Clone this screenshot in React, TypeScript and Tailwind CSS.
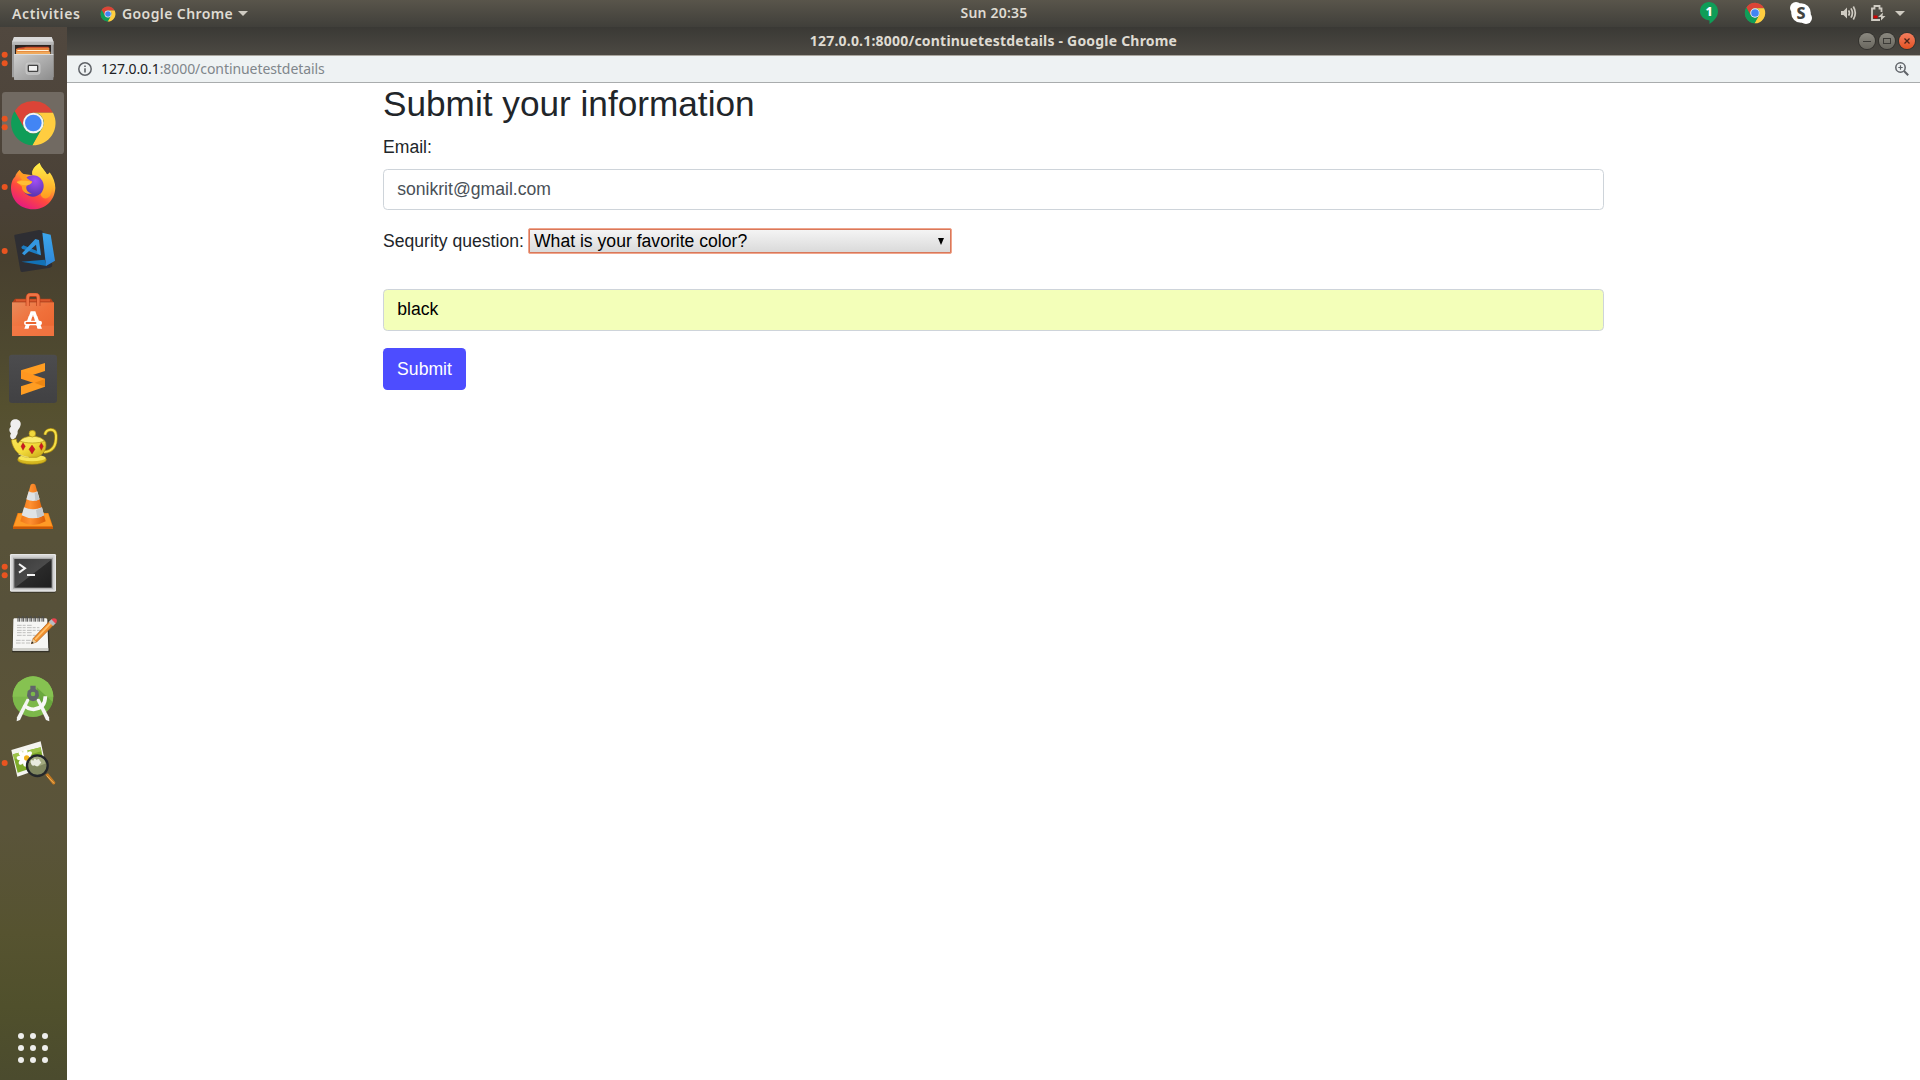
import React from "react";

const UI = "font-['Noto_Sans','Open_Sans',sans-serif]";

function ChromeGlyph({ cx, cy, r }: { cx: number; cy: number; r: number }) {
  return (
    <g transform={`translate(${cx} ${cy}) scale(${r / 67})`}>
      <circle r="66" fill="#4d8a50" />
      <path d="M-58 -33A67 67 0 0 1 59 -31H0A31 31 0 0 0 -27 -15L-31 15Z" fill="#db4437" />
      <path d="M59 -31A67 67 0 0 1 -3 67L27 15A31 31 0 0 0 16 -28L0 -31Z" fill="#ffcd40" />
      <path d="M-3 67A67 67 0 0 1 -56 -36L-27 16A31 31 0 0 0 20 25Z" fill="#0f9d58" />
      <circle r="31" fill="#f4f4f4" />
      <circle r="25" fill="#4285f4" />
    </g>
  );
}

function Files() {
  return (
    <>
      <defs>
        <linearGradient id="cab" x1="0" y1="0" x2="1" y2="1">
          <stop offset="0" stopColor="#cfcfcf" />
          <stop offset="0.45" stopColor="#b0b0b0" />
          <stop offset="1" stopColor="#8c8c8c" />
        </linearGradient>
      </defs>
      <path d="M42 51H155L161 68V172H36V68Z" fill="#a0a0a0" />
      <path d="M42 51H155L161 66H36Z" fill="#d9d9d9" />
      <rect x="36" y="65" width="125" height="9" fill="#b9b9b9" />
      <rect x="45" y="75" width="108" height="30" fill="#2b2421" />
      <path d="M52 84L80 80H146V92H52Z" fill="#c8452a" />
      <path d="M48 86H72L76 83H148V103H48Z" fill="#e2803a" />
      <rect x="52" y="90" width="94" height="3" fill="#fff3dc" />
      <rect x="49" y="95" width="102" height="8" fill="#f0a95a" />
      <rect x="42" y="102" width="118" height="78" rx="2" fill="url(#cab)" />
      <rect x="42" y="102" width="118" height="3" fill="#dcdcdc" />
      <rect x="78" y="129" width="42" height="34" rx="7" fill="#bdbdbd" stroke="#d2d2d2" strokeWidth="2" />
      <rect x="85" y="136" width="28" height="18" rx="2" fill="#f2f2f2" stroke="#444" strokeWidth="4" />
    </>
  );
}

function Firefox() {
  return (
    <>
      <defs>
        <linearGradient id="fx" x1="0.8" y1="0" x2="0.25" y2="1">
          <stop offset="0" stopColor="#fff44f" />
          <stop offset="0.35" stopColor="#ffb52c" />
          <stop offset="0.65" stopColor="#ff4a3d" />
          <stop offset="1" stopColor="#e31587" />
        </linearGradient>
        <radialGradient id="fxg" cx="0.6" cy="0.25" r="0.8">
          <stop offset="0" stopColor="#a04ff5" />
          <stop offset="1" stopColor="#5232a8" />
        </radialGradient>
        <linearGradient id="fxy" x1="0" y1="0" x2="0" y2="1">
          <stop offset="0" stopColor="#fff04a" />
          <stop offset="1" stopColor="#ff9a1f" />
        </linearGradient>
      </defs>
      <path d="M59 450C64 458 68 462 76 463L98 466C92 450 108 436 119 429C122 442 134 450 140 462C146 464 148 458 149 457C160 472 166 488 166 504C164 542 136 568 99 568C60 568 34 540 33 505C33 488 38 478 46 469C47 464 52 455 59 450Z" fill="url(#fx)" />
      <path d="M98 466C92 450 108 436 119 429C122 442 134 450 142 466C160 482 160 508 150 528C140 540 126 536 122 524C132 502 126 476 98 466Z" fill="url(#fxy)" />
      <circle cx="99" cy="498" r="32" fill="url(#fxg)" />
      <path d="M59 450C62 462 70 466 78 464C76 474 88 480 96 484C98 490 88 494 80 497C76 506 82 518 96 520C78 526 64 512 66 500C60 494 54 490 50 486C52 482 62 480 66 480C58 470 56 458 59 450Z" fill="#ff9b20" />
      <path d="M50 487C58 481 74 481 96 485C94 492 84 496 76 496C66 496 58 492 50 487Z" fill="#ffbd35" />
    </>
  );
}

function VsCode() {
  return (
    <>
      <defs>
        <linearGradient id="vs" x1="0" y1="0" x2="0" y2="1">
          <stop offset="0" stopColor="#3ba6ee" />
          <stop offset="1" stopColor="#2f86d6" />
        </linearGradient>
      </defs>
      <path d="M45 59L117 45Q127 45 129 52L157 150Q157 157 150 158L67 171Q62 172 61 166L43 64Q42 60 45 59Z" fill="#2e2e33" />
      <path d="M64 140L134 134L140 153Z" fill="#1272b6" />
      <path d="M127 53L152 59L165 137L138 153Z" fill="url(#vs)" />
      <path d="M64 96L70 91L112 108L123 121L112 118L66 101Z" fill="#1b7cc2" />
      <path d="M106 72L117 75L123 121L112 115L108 89L73 121L66 115Z" fill="#3397e0" />
    </>
  );
}

function Software() {
  return (
    <>
      <defs>
        <linearGradient id="bag" x1="0" y1="0" x2="1" y2="1">
          <stop offset="0" stopColor="#e98a5b" />
          <stop offset="0.5" stopColor="#f0703a" />
          <stop offset="1" stopColor="#e9642f" />
        </linearGradient>
      </defs>
      <path d="M45 251H153L161 263H36Z" fill="#b5401b" />
      <rect x="48" y="253" width="102" height="6" fill="#d9582c" />
      <rect x="36" y="262" width="126" height="101" fill="url(#bag)" />
      <rect x="36" y="332" width="126" height="31" fill="#f47b49" opacity="0.6" />
      <path d="M83 273V249Q83 240 91 240H107Q115 240 115 249V273" fill="none" stroke="#b93f19" strokeWidth="12" />
      <path d="M83 274V249Q83 239 91 239H107Q115 239 115 249V274" fill="none" stroke="#ef7445" strokeWidth="8" />
      <path d="M92 289H106L112 306H101L99 300L97 306H86Z M81 318H93L86 341H73Z M105 318H117L126 341H112Z" fill="#fff" />
      <path d="M86 304H97L93 318H81Z M101 304H112L117 318H105Z" fill="#fff" />
      <rect x="72" y="317" width="54" height="14" rx="7" fill="#fff" />
      <rect x="77" y="321" width="32" height="6" rx="2" fill="#ea6630" />
      <path d="M88 333H110L112 342H86Z" fill="#ee7040" />
    </>
  );
}

function Sublime() {
  return (
    <>
      <defs>
        <linearGradient id="sub" x1="0" y1="0" x2="0" y2="1">
          <stop offset="0" stopColor="#4c4c4e" />
          <stop offset="1" stopColor="#414143" />
        </linearGradient>
      </defs>
      <rect x="27" y="419" width="144" height="145" rx="9" fill="url(#sub)" />
      <path d="M63 466L135 444V468L63 491Z" fill="#ff9d22" />
      <path d="M63 514L135 491V515L63 540Z" fill="#ff9d22" />
      <path d="M63 467L135 491V515L63 491Z" fill="#ff9720" />
      <path d="M104 503L135 492V515Z" fill="#ec8612" />
    </>
  );
}

function Teapot() {
  return (
    <>
      <defs>
        <linearGradient id="pot" x1="0" y1="0" x2="1" y2="1">
          <stop offset="0" stopColor="#f7e45a" />
          <stop offset="0.5" stopColor="#f4dc3c" />
          <stop offset="1" stopColor="#c5a313" />
        </linearGradient>
      </defs>
      <path d="M38 90C30 84 28 78 33 70C26 62 27 54 33 50C28 40 34 28 44 28C54 26 64 34 62 44C60 56 52 58 53 66C54 74 48 76 48 82Z" fill="#efefef" />
      <path d="M135 74C138 56 166 52 168 76C169 96 166 124 132 126" fill="none" stroke="#a98a10" strokeWidth="10" />
      <path d="M135 74C138 56 166 52 168 76C169 96 166 124 132 126" fill="none" stroke="#f4df48" strokeWidth="6" />
      <ellipse cx="96" cy="149" rx="43" ry="14" fill="#d5b720" stroke="#a58610" strokeWidth="2" />
      <ellipse cx="96" cy="144" rx="41" ry="10" fill="#f6e556" />
      <path d="M34 90L49 87C50 98 53 101 57 97C64 78 130 78 137 97C142 120 128 136 110 142H82C62 140 38 122 34 90Z" fill="url(#pot)" stroke="#a98a10" strokeWidth="2" />
      <path d="M60 93C72 74 122 74 133 93C120 101 74 101 60 93Z" fill="#f9eb6e" stroke="#b19215" strokeWidth="2" />
      <circle cx="97" cy="71" r="10" fill="#f1d83c" stroke="#ab8b10" strokeWidth="2" />
      <path d="M69 98L76 109L69 121L63 109Z M96 105L105 118L96 132L87 118Z M124 98L130 109L124 121L118 109Z" fill="#cf1722" stroke="#8f1a10" strokeWidth="1" />
      <path d="M55 132Q76 142 86 142" fill="none" stroke="#fff7a5" strokeWidth="2" />
    </>
  );
}

function Vlc() {
  return (
    <>
      <defs>
        <linearGradient id="cone" x1="0" y1="0" x2="1" y2="0">
          <stop offset="0" stopColor="#f07818" />
          <stop offset="0.4" stopColor="#ff9030" />
          <stop offset="1" stopColor="#d95c06" />
        </linearGradient>
      </defs>
      <path d="M53 309H145L159 350V357H39V350Z" fill="#f57e0e" />
      <path d="M39 350H159V357H39Z" fill="#c95a08" />
      <path d="M55 311H144L156 348H42Z" fill="#ff9a26" />
      <path d="M92 224Q99 219 106 224L137 334Q99 356 61 334Z" fill="url(#cone)" />
      <path d="M86 244Q99 251 112 244L119 268Q99 278 79 268Z" fill="#dfe3e6" />
      <path d="M72 292Q99 304 126 292L132 316Q99 334 65 316Z" fill="#dfe3e6" />
      <path d="M112 246L118 268Q112 272 106 273L104 249Z M126 293L132 316Q122 322 112 324L108 300Z" fill="#c3c8cc" />
    </>
  );
}

function Terminal() {
  return (
    <>
      <defs>
        <linearGradient id="scr" x1="0" y1="0" x2="1" y2="1">
          <stop offset="0" stopColor="#3c3c3c" />
          <stop offset="0.5" stopColor="#4a4a4a" />
          <stop offset="0.52" stopColor="#2a2a2a" />
          <stop offset="1" stopColor="#1f1f1f" />
        </linearGradient>
      </defs>
      <rect x="32" y="540" width="134" height="9" rx="3" fill="#25231e" opacity="0.5" />
      <rect x="30" y="432" width="138" height="113" rx="4" fill="#e6e6e6" />
      <rect x="34" y="436" width="130" height="105" rx="2" fill="#d2d2d2" />
      <rect x="39" y="443" width="120" height="93" fill="#a8a8a8" />
      <rect x="43" y="447" width="112" height="86" fill="url(#scr)" />
      <path d="M57 462L75 475L57 488" fill="none" stroke="#f4f4f4" strokeWidth="6" />
      <rect x="81" y="492" width="24" height="6" fill="#f4f4f4" />
    </>
  );
}

function TextEditor() {
  return (
    <>
      <path d="M40 60H146L149 157H36Z" fill="#26251f" opacity="0.7" />
      <path d="M43 55H138Q142 55 142 60L145 152H38L40 60Q40 55 43 55Z" fill="#f6f6f4" />
      <path d="M38 144H145V152H38Z" fill="#cfcfca" />
      <g fill="none" stroke="#a3a3a1" strokeWidth="2">
        <path strokeDasharray="14 3 9 4" d="M51 76H98M51 83H118M51 91H126M51 98H96M51 106H114M48 121H106M48 129H90" />
      </g>
      <g fill="none" stroke="#4b4b49" strokeWidth="3">
        {[54, 66, 78, 90, 102, 114, 126].map((x) => (
          <path key={x} d={`M${x} 65V53Q${x} 49 ${x + 3} 49Q${x + 5} 50 ${x + 5} 54V65`} />
        ))}
      </g>
      <path d="M94 131L100 115L148 64L160 76L110 126Z" fill="#f08f2c" stroke="#a65a16" strokeWidth="2" />
      <path d="M104 116L150 68L154 71L107 121Z" fill="#ffc06c" />
      <path d="M94 131L99 117L109 126Z" fill="#e9cfa0" />
      <path d="M93 132L96 124L101 129Z" fill="#222" />
      <path d="M146 66L155 57L168 69L159 78Z" fill="#b7bcc2" />
      <path d="M154 58Q160 52 168 56Q174 62 167 71Z" fill="#e8434e" />
    </>
  );
}

function AndroidStudio() {
  return (
    <>
      <circle cx="99" cy="290" r="61" fill="#7cb84a" />
      <path d="M38 290A61 61 0 0 1 160 290Z" fill="#86c251" />
      <path d="M110 262L158 306A61 61 0 0 1 142 334L112 300Z" fill="#5f9c36" opacity="0.7" />
      <path d="M90 297L60 360L50 364L51 352L80 296Z" fill="#f3f3f3" />
      <path d="M108 297L138 360L148 364L147 352L118 296Z" fill="#f3f3f3" />
      <path d="M72 315Q84 328 101 328Q136 325 136 289" fill="none" stroke="#f7f7f7" strokeWidth="11" />
      <path d="M91 257H107V267L115 273L117 288L109 301L99 304L89 301L81 288L83 273L91 267Z" fill="#616569" />
      <circle cx="99" cy="282" r="7" fill="#7cb84a" />
    </>
  );
}

function ImageViewer() {
  const petals = [0, 45, 90, 135, 180, 225, 270, 315];
  return (
    <>
      <path d="M34 450L122 424L138 500L52 530Z" fill="#f4f4f0" />
      <path d="M39 463L122 442L132 492L53 518Z" fill="#7eab2a" />
      <path d="M39 463L122 442L124 454L42 478Z" fill="#9cc248" />
      {petals.map((a) => (
        <ellipse key={a} cx="76" cy="461" rx="7" ry="13" fill="#fff" transform={`rotate(${a} 76 474)`} />
      ))}
      <path d="M136 524L144 520L166 547Q166 556 158 553Z" fill="#c57a22" />
      <path d="M140 527L162 550" stroke="#f0b45c" strokeWidth="3" />
      <circle cx="112" cy="497" r="32" fill="#7f865f" />
      <path d="M84 484Q93 469 114 469Q134 470 138 490L112 500Z" fill="#a3ab80" />
      <path d="M92 486Q92 476 100 482Q104 470 110 480Q118 472 120 484Q128 486 118 494Q112 502 104 496Q94 500 92 486Z" fill="#e9ebe0" />
      <circle cx="80" cy="474" r="8" fill="#f1b31c" />
      <circle cx="112" cy="497" r="31" fill="none" stroke="#24272a" strokeWidth="7" />
    </>
  );
}

type Item = { name: string; top: number; dots: number; active?: boolean; art: React.ReactNode };

const ITEMS: Item[] = [
  { name: "Files", top: 21, dots: 2, art: <Files /> },
  { name: "Google Chrome", top: 213, dots: 2, active: true, art: <ChromeGlyph cx={100} cy={309} r={67} /> },
  { name: "Firefox", top: 405, dots: 1, art: <Firefox /> },
  { name: "Visual Studio Code", top: 12, dots: 1, art: <VsCode /> },
  { name: "Ubuntu Software", top: 204, dots: 0, art: <Software /> },
  { name: "Sublime Text", top: 396, dots: 0, art: <Sublime /> },
  { name: "Teapot", top: 3, dots: 0, art: <Teapot /> },
  { name: "VLC", top: 195, dots: 0, art: <Vlc /> },
  { name: "Terminal", top: 387, dots: 2, art: <Terminal /> },
  { name: "Text Editor", top: 9, dots: 0, art: <TextEditor /> },
  { name: "Android Studio", top: 201, dots: 0, art: <AndroidStudio /> },
  { name: "Image Viewer", top: 393, dots: 1, art: <ImageViewer /> },
];

function DockItem({ item }: { item: Item }) {
  const ys = item.dots === 2 ? [83, 109] : item.dots === 1 ? [96] : [];
  return (
    <svg aria-label={item.name} className="block h-16 w-[67px] shrink-0" viewBox={`0 ${item.top} 201 192`}>
      {item.active && <rect x="6" y={item.top + 3} width="186" height="186" rx="10" fill="#716a62" />}
      {ys.map((y) => (
        <circle key={y} cx="14" cy={item.top + y} r="9" fill="#e95420" />
      ))}
      {item.art}
    </svg>
  );
}

function Dock() {
  return (
    <nav className="flex w-[67px] shrink-0 flex-col bg-[linear-gradient(180deg,#51483f_0%,#4a4136_17%,#48402f_22%,#4e4930_31%,#55502f_36%,#595338_42%,#57513a_55%,#5b5438_66%,#5a543a_76%,#565330_86%,#50502c_93%,#4b4b2e_100%)]">
      {ITEMS.map((item) => (
        <DockItem key={item.name} item={item} />
      ))}
      <div className="mt-auto mb-[17px] ml-[18px] grid w-[30px] grid-cols-3 gap-[6px]">
        {Array.from({ length: 9 }, (_, i) => (
          <span key={i} className="size-[6px] rounded-full bg-[#eeeeec]" />
        ))}
      </div>
    </nav>
  );
}

function TopBar() {
  return (
    <header className={`${UI} grid h-[27px] shrink-0 grid-cols-[1fr_auto_1fr] items-center bg-linear-to-b from-[#59554b] to-[#403f3a] text-[14px] leading-[27px] font-semibold text-[#dfdbd2]`}>
      <div className="flex items-center pl-3">
        <span className="w-[68px] tracking-[0.6px] whitespace-nowrap">Activities</span>
        <svg className="ml-5 size-4" viewBox="0 0 16 16">
          <ChromeGlyph cx={8} cy={8} r={7.5} />
        </svg>
        <span className="ml-[6px] w-[111px] tracking-[0.4px] whitespace-nowrap">Google Chrome</span>
        <svg className="ml-[5px] h-[5px] w-[10px]" viewBox="0 0 10 5">
          <path d="M0 0H10L5 5Z" fill="#cfcbc2" />
        </svg>
      </div>
      <span className="relative -top-px left-[34px] tracking-[0.2px] whitespace-nowrap">Sun 20:35</span>
      <div className="flex items-center justify-end pr-[15px]">
        <svg className="h-[27px] w-[220px]" viewBox="1685 0 220 27">
          <path d="M1709 2C1714 2 1718 6 1718 11.300C1718 17 1714 21 1709.500 24V20.500C1704 20 1700 16 1700 11.300C1700 6 1704 2 1709 2Z" fill="#0f9d58" />
          <text x="1709" y="16" textAnchor="middle" fontSize="12.500" fontWeight="800" fill="#fff" fontFamily="Noto Sans">1</text>
          <ChromeGlyph cx={1755} cy={13} r={10.3} />
          <circle cx="1801" cy="13" r="9.800" fill="#fff" />
          <circle cx="1796" cy="8" r="6" fill="#fff" />
          <circle cx="1806" cy="18" r="6" fill="#fff" />
          <text x="1801" y="18.600" textAnchor="middle" fontSize="16" fontWeight="800" fill="#444440" fontFamily="Noto Sans">S</text>
          <path d="M1841 11H1843.500L1847 7.500V18.500L1843.500 15H1841Z" fill="#cfcbc2" />
          <g fill="none" stroke="#cfcbc2" strokeWidth="1.700">
            <path d="M1848.600 10.400Q1850.200 13 1848.600 15.600M1851 8.400Q1853.800 13 1851 17.600M1853.300 6.500Q1857.300 13 1853.300 19.500" />
            <path strokeWidth="1.800" d="M1880 20H1872V8.500H1874.500V6H1879.500V8.500H1881.500V12" />
          </g>
          <rect x="1873.500" y="15.500" width="4" height="2.800" fill="#d40000" />
          <path d="M1883 12.500L1878 17H1881V20.500L1885.500 16H1882.500Z" fill="#cfcbc2" />
          <path d="M1895 11H1905L1900 16Z" fill="#cfcbc2" />
        </svg>
      </div>
    </header>
  );
}

function TitleBar() {
  return (
    <div className={`${UI} grid h-7 shrink-0 grid-cols-[1fr_auto_1fr] items-center bg-linear-to-b from-[#3a3935] to-[#4c4943] text-[14px] leading-7 font-bold text-[#dfdbd2]`}>
      <span />
      <span className="tracking-[0.2px] whitespace-nowrap">127.0.0.1:8000/continuetestdetails - Google Chrome</span>
      <div className="flex justify-end gap-1 pr-[5px]">
        <span className="grid size-4 place-items-center rounded-full bg-linear-to-b from-[#8b8980] to-[#69675f] ring-1 ring-[#33322e]">
          <span className="h-px w-2 bg-[#3c3b37]" />
        </span>
        <span className="grid size-4 place-items-center rounded-full bg-linear-to-b from-[#8b8980] to-[#69675f] ring-1 ring-[#33322e]">
          <span className="h-[6px] w-2 border border-[#3c3b37]" />
        </span>
        <span className="grid size-4 place-items-center rounded-full bg-linear-to-b from-[#f37d5d] to-[#e4511f] ring-1 ring-[#33322e]">
          <svg className="size-[6px]" viewBox="0 0 6 6">
            <path d="M0.500 0.500L5.500 5.500M5.500 0.500L0.500 5.500" stroke="#4a2418" strokeWidth="1.300" />
          </svg>
        </span>
      </div>
    </div>
  );
}

function AddressBar() {
  return (
    <div className={`${UI} flex h-7 shrink-0 items-center border-t border-b border-t-[#aaa69e] border-b-[#a9acad] bg-[#eef2f3] pr-[11px] pl-[11px] text-[14px] text-[#80868b]`}>
      <svg className="size-[14px]" viewBox="0 0 14 14" fill="none" stroke="#5f6368">
        <circle cx="7" cy="7" r="6.200" strokeWidth="1.500" />
        <path d="M7 6.200V10.500M7 3.500V5" strokeWidth="1.600" />
      </svg>
      <span className="mb-[2px] ml-[9px] w-[224px] tracking-[-0.07px] whitespace-nowrap">
        <span className="text-[#202124]">127.0.0.1</span>:8000/continuetestdetails
      </span>
      <svg className="ml-auto size-[14px]" viewBox="0 0 14 14" fill="none" stroke="#5f6368">
        <circle cx="5.500" cy="5.500" r="4.700" strokeWidth="1.500" />
        <path d="M9 9L13.200 13.200" strokeWidth="2" />
        <path d="M5.500 3.300V7.700M3.300 5.500H7.700" strokeWidth="1.200" />
      </svg>
    </div>
  );
}

function Page() {
  return (
    <main className="min-h-0 flex-1 bg-white pl-[316px] font-['Liberation_Sans',Arial,sans-serif] text-[17.6px] leading-[26.4px] text-[#212529]">
      <div className="w-[1221px]">
        <h2 className="mb-[8.8px] text-[35.2px] leading-[42.24px]">Submit your information</h2>
        <label className="mb-[8.8px] block">Email:</label>
        <div className="flex h-[41px] items-center rounded-[4.4px] border border-[#ced4da] px-[13.2px] pb-[2px] text-[#495057]">sonikrit@gmail.com</div>
        <div className="mt-[18px] flex h-[26px] items-center">
          <span className="w-[145px] whitespace-nowrap">Sequrity question:</span>
          <div className="flex h-[26px] w-[424px] items-center justify-between rounded-[2px] border border-[#f0a58c] bg-[#d9785a] p-px">
            <div className="flex h-full w-full items-center justify-between bg-linear-to-b from-[#f4f4f4] to-[#dadada] pr-[6px] pl-1 text-black">
              <span className="leading-[22px]">What is your favorite color?</span>
              <svg className="h-[7px] w-[6px]" viewBox="0 0 6 7">
                <path d="M0 0H6L3 7Z" fill="#000" />
              </svg>
            </div>
          </div>
        </div>
        <div className="mt-[35px] flex h-[42px] items-center rounded-[4.4px] border border-[#ced4da] bg-[#f3ffb9] px-[13.2px] pb-[2px] text-black">black</div>
        <button className="mt-[17px] block h-[42px] w-[83px] rounded-[4.4px] bg-[#4d4dff] text-center text-white">Submit</button>
      </div>
    </main>
  );
}

export default function App() {
  return (
    <div className="flex h-[1080px] w-[1920px] flex-col overflow-hidden">
      <TopBar />
      <div className="flex min-h-0 flex-1">
        <Dock />
        <div className="flex min-w-0 flex-1 flex-col">
          <TitleBar />
          <AddressBar />
          <Page />
        </div>
      </div>
    </div>
  );
}
